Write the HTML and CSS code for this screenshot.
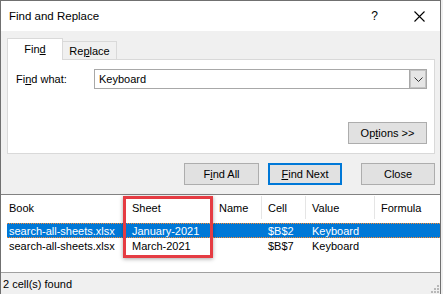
FILE: index.html
```html
<!DOCTYPE html>
<html>
<head>
<meta charset="utf-8">
<title>Find and Replace</title>
<link rel="stylesheet" href="styles.css">
</head>
<body>
<div class="window">
  <div class="titlebar">
    <span class="title">Find and Replace</span>
    <span class="help">?</span>
    <svg class="close-x" width="11" height="11" viewBox="0 0 11 11"><path d="M0.5 0.5L10.5 10.5M10.5 0.5L0.5 10.5" stroke="#000" stroke-width="1.1" fill="none"/></svg>
  </div>
  <div class="dialog">
    <div class="tabs">
      <div class="tab active">Fin<u>d</u></div>
      <div class="tab">Re<u>p</u>lace</div>
    </div>
    <div class="panel">
      <div class="find-row">
        <span class="label">Fi<u>n</u>d what:</span>
        <div class="combo">
          <span class="combo-text">Keyboard</span>
          <span class="drop"><svg width="9" height="5" viewBox="0 0 9 5"><path d="M0.5 0.5L4.5 4.5L8.5 0.5" stroke="#333" stroke-width="1" fill="none"/></svg></span>
        </div>
      </div>
      <div class="options-row">
        <span class="btn options">Op<u>t</u>ions &gt;&gt;</span>
      </div>
    </div>
    <div class="actions">
      <span class="btn find-all">F<u>i</u>nd All</span>
      <span class="btn find-next"><u>F</u>ind Next</span>
      <span class="btn close">Close</span>
    </div>
  </div>
  <div class="results">
    <div class="header">
      <span class="hcell first">Book</span>
      <span class="hcell">Sheet</span>
      <span class="hcell">Name</span>
      <span class="hcell">Cell</span>
      <span class="hcell">Value</span>
      <span class="hcell last">Formula</span>
    </div>
    <div class="rows">
      <div class="row selected">
        <span class="cell first">search-all-sheets.xlsx</span>
        <span class="cell">January-2021</span>
        <span class="cell"></span>
        <span class="cell">$B$2</span>
        <span class="cell">Keyboard</span>
        <span class="cell"></span>
      </div>
      <div class="row">
        <span class="cell first">search-all-sheets.xlsx</span>
        <span class="cell">March-2021</span>
        <span class="cell"></span>
        <span class="cell">$B$7</span>
        <span class="cell">Keyboard</span>
        <span class="cell"></span>
      </div>
    </div>
    <div class="highlight-box"></div>
  </div>
  <div class="status">
    <span>2 cell(s) found</span>
    <svg class="grip" width="9" height="9" viewBox="0 0 9 9">
      <rect x="7" y="1" width="2" height="2" fill="#b8b8b8"/>
      <rect x="4" y="4" width="2" height="2" fill="#b8b8b8"/>
      <rect x="7" y="4" width="2" height="2" fill="#b8b8b8"/>
      <rect x="1" y="7" width="2" height="2" fill="#b8b8b8"/>
      <rect x="4" y="7" width="2" height="2" fill="#b8b8b8"/>
      <rect x="7" y="7" width="2" height="2" fill="#b8b8b8"/>
    </svg>
  </div>
</div>
</body>
</html>
```
FILE: styles.css
```css
html, body {
  margin: 0;
  padding: 0;
  background: #f0f0f0;
}
body {
  font-family: "Liberation Sans", Arial, sans-serif;
  font-size: 11px;
  color: #000;
}
u { text-decoration: underline; text-underline-offset: 1px; }

.window {
  width: 439px;
  height: 293px;
  border: 1px solid #707070;
  border-bottom: none;
  display: flex;
  flex-direction: column;
  background: #f0f0f0;
}

.titlebar {
  height: 30px;
  background: #fff;
  display: flex;
  align-items: center;
  padding-left: 8px;
  flex: none;
}
.title { font-size: 11.5px; flex: 1; }
.help { font-size: 12px; margin-right: 36px; }
.close-x { margin-right: 15px; }

.dialog {
  height: 163px;
  padding: 7px 5px 0 6px;
  box-sizing: border-box;
  flex: none;
}

.tabs {
  display: flex;
  height: 21px;
  align-items: flex-end;
}
.tab {
  box-sizing: border-box;
  border: 1px solid #d9d9d9;
  border-bottom: none;
  display: flex;
  align-items: center;
  justify-content: center;
}
.tab.active {
  width: 56px;
  height: 22px;
  background: #fff;
  margin-bottom: -1px;
  position: relative;
  z-index: 1;
  padding-bottom: 2px;
}
.tab:not(.active) {
  width: 54px;
  height: 18px;
  border-left: none;
  background: #f0f0f0;
}

.panel {
  width: 428px;
  height: 95px;
  box-sizing: border-box;
  border: 1px solid #d9d9d9;
  background: #fff;
  padding: 9px 7px 9px 8px;
  display: flex;
  flex-direction: column;
}
.find-row {
  display: flex;
  align-items: center;
  height: 20px;
}
.label { width: 78px; }
.combo {
  width: 333px;
  height: 20px;
  box-sizing: border-box;
  border: 1px solid #a8a8a8;
  display: flex;
  align-items: center;
  padding-left: 4px;
}
.combo-text { flex: 1; }
.drop {
  width: 17px;
  height: 18px;
  box-sizing: border-box;
  background: #e6e6e6;
  border-left: 1px solid #a8a8a8;
  box-shadow: inset 0 0 0 1px #c4c4c4;
  display: flex;
  align-items: center;
  justify-content: center;
}
.options-row {
  margin-top: auto;
  display: flex;
  justify-content: flex-end;
}

.btn {
  height: 22px;
  box-sizing: border-box;
  border: 1px solid #adadad;
  background: #e1e1e1;
  display: flex;
  align-items: center;
  justify-content: center;
}
.options { width: 79px; }

.actions {
  display: flex;
  justify-content: flex-end;
  margin-top: 9px;
  width: 428px;
}
.find-all { width: 75px; }
.find-next {
  width: 74px;
  margin-left: 9px;
  border: 2px solid #0078d7;
}
.close { width: 74px; margin-left: 19px; }

.results {
  height: 79px;
  box-sizing: border-box;
  border-top: 1px solid #828282;
  border-bottom: 1px solid #a0a0a0;
  background: #fff;
  position: relative;
  flex: none;
}
.header {
  display: grid;
  grid-template-columns: 125px 87px 49px 44px 69px 1fr;
  height: 26px;
}
.hcell {
  display: flex;
  align-items: center;
  padding-left: 6px;
  border-right: 1px solid #e5e5e5;
  margin: 1px 0 2px;
}
.hcell.first { padding-left: 8px; }
.hcell.last { border-right: none; }

.rows { padding-top: 2px; }
.row {
  display: grid;
  grid-template-columns: 119px 87px 49px 44px 69px 1fr;
  height: 15px;
  margin-left: 6px;
  box-sizing: border-box;
  align-items: center;
}
.cell { padding-left: 6px; white-space: nowrap; }
.cell.first { padding-left: 2px; }
.row.selected {
  background: #0078d7;
  color: #fff;
  border-top: 1px dotted #ff8a2e;
  border-bottom: 1px dotted #ff8a2e;
}

.highlight-box {
  position: absolute;
  left: 122px;
  top: 1px;
  width: 90px;
  height: 62px;
  box-sizing: border-box;
  border: 3px solid #e53c43;
  box-shadow: 0 1px 4px rgba(0, 0, 0, 0.35);
}

.status {
  flex: 1;
  display: flex;
  align-items: center;
  justify-content: space-between;
  padding-left: 2px;
  padding-top: 1px;
}
.grip { align-self: flex-end; margin: 0 1px 1px 0; }
```
